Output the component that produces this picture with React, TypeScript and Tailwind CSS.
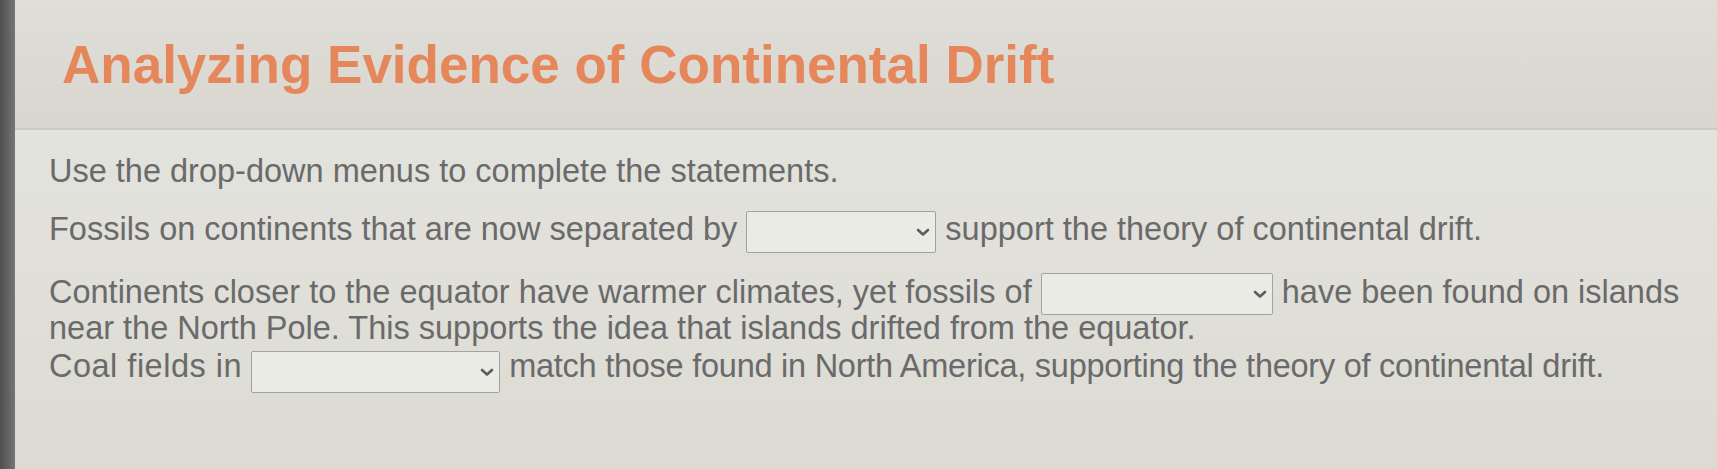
import React from "react";

function Select({ width, mt, mb }: { width: string; mt: string; mb: string }) {
  return (
    <span
      className={`inline-flex h-[42px] items-center justify-end rounded-[2px] border-[1.5px] border-[#a2a29e] bg-[#ebebe6] pr-[5px] align-middle ${width} ${mt} ${mb}`}
    >
      <svg width="14" height="9" viewBox="0 0 14 9" fill="none">
        <path d="M2 2 L7 6.5 L12 2" stroke="#5c5c5c" strokeWidth="2.6" strokeLinecap="round" strokeLinejoin="round" />
      </svg>
    </span>
  );
}

export default function App() {
  return (
    <div
      className="flex h-[469px] w-full overflow-hidden bg-[#e1e0da]"
      style={{ fontFamily: '"Liberation Sans", Arial, sans-serif' }}
    >
      <div className="w-[15px] shrink-0 bg-gradient-to-r from-[#4e4e4e] to-[#767676]" />
      <div className="flex min-w-0 flex-1 flex-col">
        <header className="h-[130px] shrink-0 border-b-2 border-[#cfcbc4] bg-gradient-to-b from-[#dfded8] to-[#d9d6cf] pl-[47px] pt-[38px]">
          <h1 className="text-[53px] font-bold leading-none text-[#e5875b]">
            Analyzing Evidence of Continental Drift
          </h1>
        </header>
        <main className="flex-1 bg-gradient-to-b from-[#e3e3dd] to-[#dcdad3] pl-[34px] pt-[23px] text-[32.5px] leading-[36px] text-[#6a6a6a]">
          <p className="whitespace-nowrap">Use the drop-down menus to complete the statements.</p>
          <p className="mt-[22px] whitespace-nowrap">
            Fossils on continents that are now separated by{" "}
            <Select width="w-[190px]" mt="mt-[-10px]" mb="mb-[-12px]" /> support the theory of continental drift.
          </p>
          <p className="mt-[27px] whitespace-nowrap">
            Continents closer to the equator have warmer climates, yet fossils of{" "}
            <Select width="w-[232px]" mt="mt-[-11px]" mb="mb-[-11px]" /> have been found on islands
            <br />
            near the North Pole. This supports the idea that islands drifted from the equator.
          </p>
          <p className="mt-[2px] whitespace-nowrap">
            <span className="tracking-[0.5px]">Coal fields in</span>{" "}
            <Select width="w-[249px]" mt="mt-[-7px]" mb="mb-[-15px]" />{" "}
            <span className="tracking-[-0.25px]">
              match those found in North America, supporting the theory of continental drift.
            </span>
          </p>
        </main>
      </div>
    </div>
  );
}
